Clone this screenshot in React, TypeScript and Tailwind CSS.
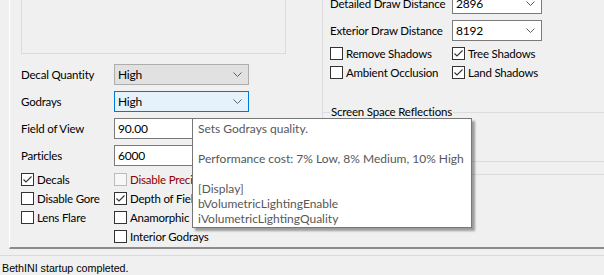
import type { ReactNode } from "react";

const Chevron = () => (
  <svg width="9" height="5" viewBox="0 0 9 5" className="shrink-0">
    <polyline points="0.5,0.5 4.5,4.5 8.5,0.5" fill="none" stroke="#606060" strokeWidth="1" />
  </svg>
);

function Combo({
  value,
  variant = "list",
  width,
}: {
  value: string;
  variant?: "list" | "focus" | "edit";
  width: string;
}) {
  const look =
    variant === "focus"
      ? "bg-[#e5f1fb] border-[#0078d7]"
      : variant === "edit"
        ? "bg-white border-[#7a7a7a]"
        : "bg-[#e1e1e1] border-[#adadad]";
  return (
    <div className={`h-[21px] ${width} border ${look} flex items-center justify-between pl-[3px] pr-[6px]`}>
      <span className="leading-none text-[12px]">{value}</span>
      <Chevron />
    </div>
  );
}

function TextBox({ value }: { value: string }) {
  return (
    <div className="h-[21px] w-[135px] border border-[#7a7a7a] bg-white flex items-center pl-[3px]">
      <span className="leading-none text-[12px]">{value}</span>
    </div>
  );
}

function Check({
  label,
  checked = false,
  disabled = false,
}: {
  label: string;
  checked?: boolean;
  disabled?: boolean;
}) {
  return (
    <div className="h-[19px] flex items-center gap-[3px] whitespace-nowrap">
      <div
        className={`w-[13px] h-[13px] border shrink-0 ${
          disabled ? "border-[#bcbcbc] bg-[#f7f7f7]" : "border-[#333333] bg-white"
        }`}
      >
        {checked && (
          <svg width="11" height="11" viewBox="0 0 11 11">
            <polyline points="1.5,5.5 4,8 9.5,2.5" fill="none" stroke="#333333" strokeWidth="1.1" />
          </svg>
        )}
      </div>
      <span className={disabled ? "text-[#8b0000]" : ""}>{label}</span>
    </div>
  );
}

function Row({ label, labelWidth, children }: { label: string; labelWidth: string; children: ReactNode }) {
  return (
    <div className="h-[21px] flex items-center">
      <span className={`${labelWidth} shrink-0 whitespace-nowrap`}>{label}</span>
      {children}
    </div>
  );
}

export default function App() {
  return (
    <div className="w-[604px] h-[275px] bg-[#f0f0f0] overflow-hidden relative font-['Lato',sans-serif] text-[11.5px] tracking-[-0.2px] text-black">
      <div className="h-[249px] ml-[9px] border-l border-white border-b-2 border-b-[#8c8c8c] flex">
        {/* left column */}
        <div className="w-[312px] shrink-0 pl-[11px] flex flex-col">
          <div className="mt-[-10px] h-[64px] w-[265px] shrink-0 border border-[#dcdcdc]" />
          <div className="mt-[10px] flex flex-col gap-[6px]">
            <Row label="Decal Quantity" labelWidth="w-[93px]">
              <Combo value="High" width="w-[135px]" />
            </Row>
            <Row label="Godrays" labelWidth="w-[93px]">
              <Combo value="High" variant="focus" width="w-[135px]" />
            </Row>
            <Row label="Field of View" labelWidth="w-[93px]">
              <TextBox value="90.00" />
            </Row>
            <Row label="Particles" labelWidth="w-[93px]">
              <TextBox value="6000" />
            </Row>
          </div>
          <div className="mt-[4px] grid grid-cols-[93px_1fr]">
            <Check label="Decals" checked />
            <Check label="Disable Precipitation Occlusion" disabled />
            <Check label="Disable Gore" />
            <Check label="Depth of Field" checked />
            <Check label="Lens Flare" />
            <Check label="Anamorphic Lens Flare" />
            <div />
            <Check label="Interior Godrays" />
          </div>
        </div>

        {/* right column */}
        <div className="flex-1 flex flex-col">
          <div className="h-[112px] shrink-0 border-l border-[#dcdcdc] pl-[7px] flex flex-col">
            <div className="mt-[-7px] flex flex-col gap-[6px]">
              <Row label="Detailed Draw Distance" labelWidth="w-[122px]">
                <Combo value="2896" variant="edit" width="w-[90px]" />
              </Row>
              <Row label="Exterior Draw Distance" labelWidth="w-[122px]">
                <Combo value="8192" variant="edit" width="w-[90px]" />
              </Row>
            </div>
            <div className="mt-[3px] grid grid-cols-[122px_1fr]">
              <Check label="Remove Shadows" />
              <Check label="Tree Shadows" checked />
              <Check label="Ambient Occlusion" />
              <Check label="Land Shadows" checked />
            </div>
          </div>
          <div className="relative h-[50px] shrink-0 border-t border-b border-l border-[#dcdcdc]">
            <span className="absolute left-[7px] top-[-10px] bg-[#f0f0f0] px-px leading-[18px]">
              Screen Space Reflections
            </span>
          </div>
          <div className="mt-[12px] h-[60px] shrink-0 border-t border-[#dcdcdc]" />
        </div>
      </div>

      {/* status strip */}
      <div className="mt-[6px] border-t border-[#dadada] pt-[5px] pl-[2px] font-['Liberation_Sans',sans-serif] text-[10.7px] tracking-normal leading-[14px]">
        BethINI startup completed.
      </div>

      {/* tooltip */}
      <div className="absolute left-[192px] top-[118px] w-[280px] h-[110px] bg-white border border-[#767676] shadow-[3px_3px_2px_rgba(0,0,0,0.35)] pl-[5px] pt-[2px] text-[#575757] text-[12px] tracking-normal leading-[15px]">
        <div>Sets Godrays quality.</div>
        <div>&nbsp;</div>
        <div>Performance cost: 7% Low, 8% Medium, 10% High</div>
        <div>&nbsp;</div>
        <div>[Display]</div>
        <div>bVolumetricLightingEnable</div>
        <div>iVolumetricLightingQuality</div>
      </div>
    </div>
  );
}
